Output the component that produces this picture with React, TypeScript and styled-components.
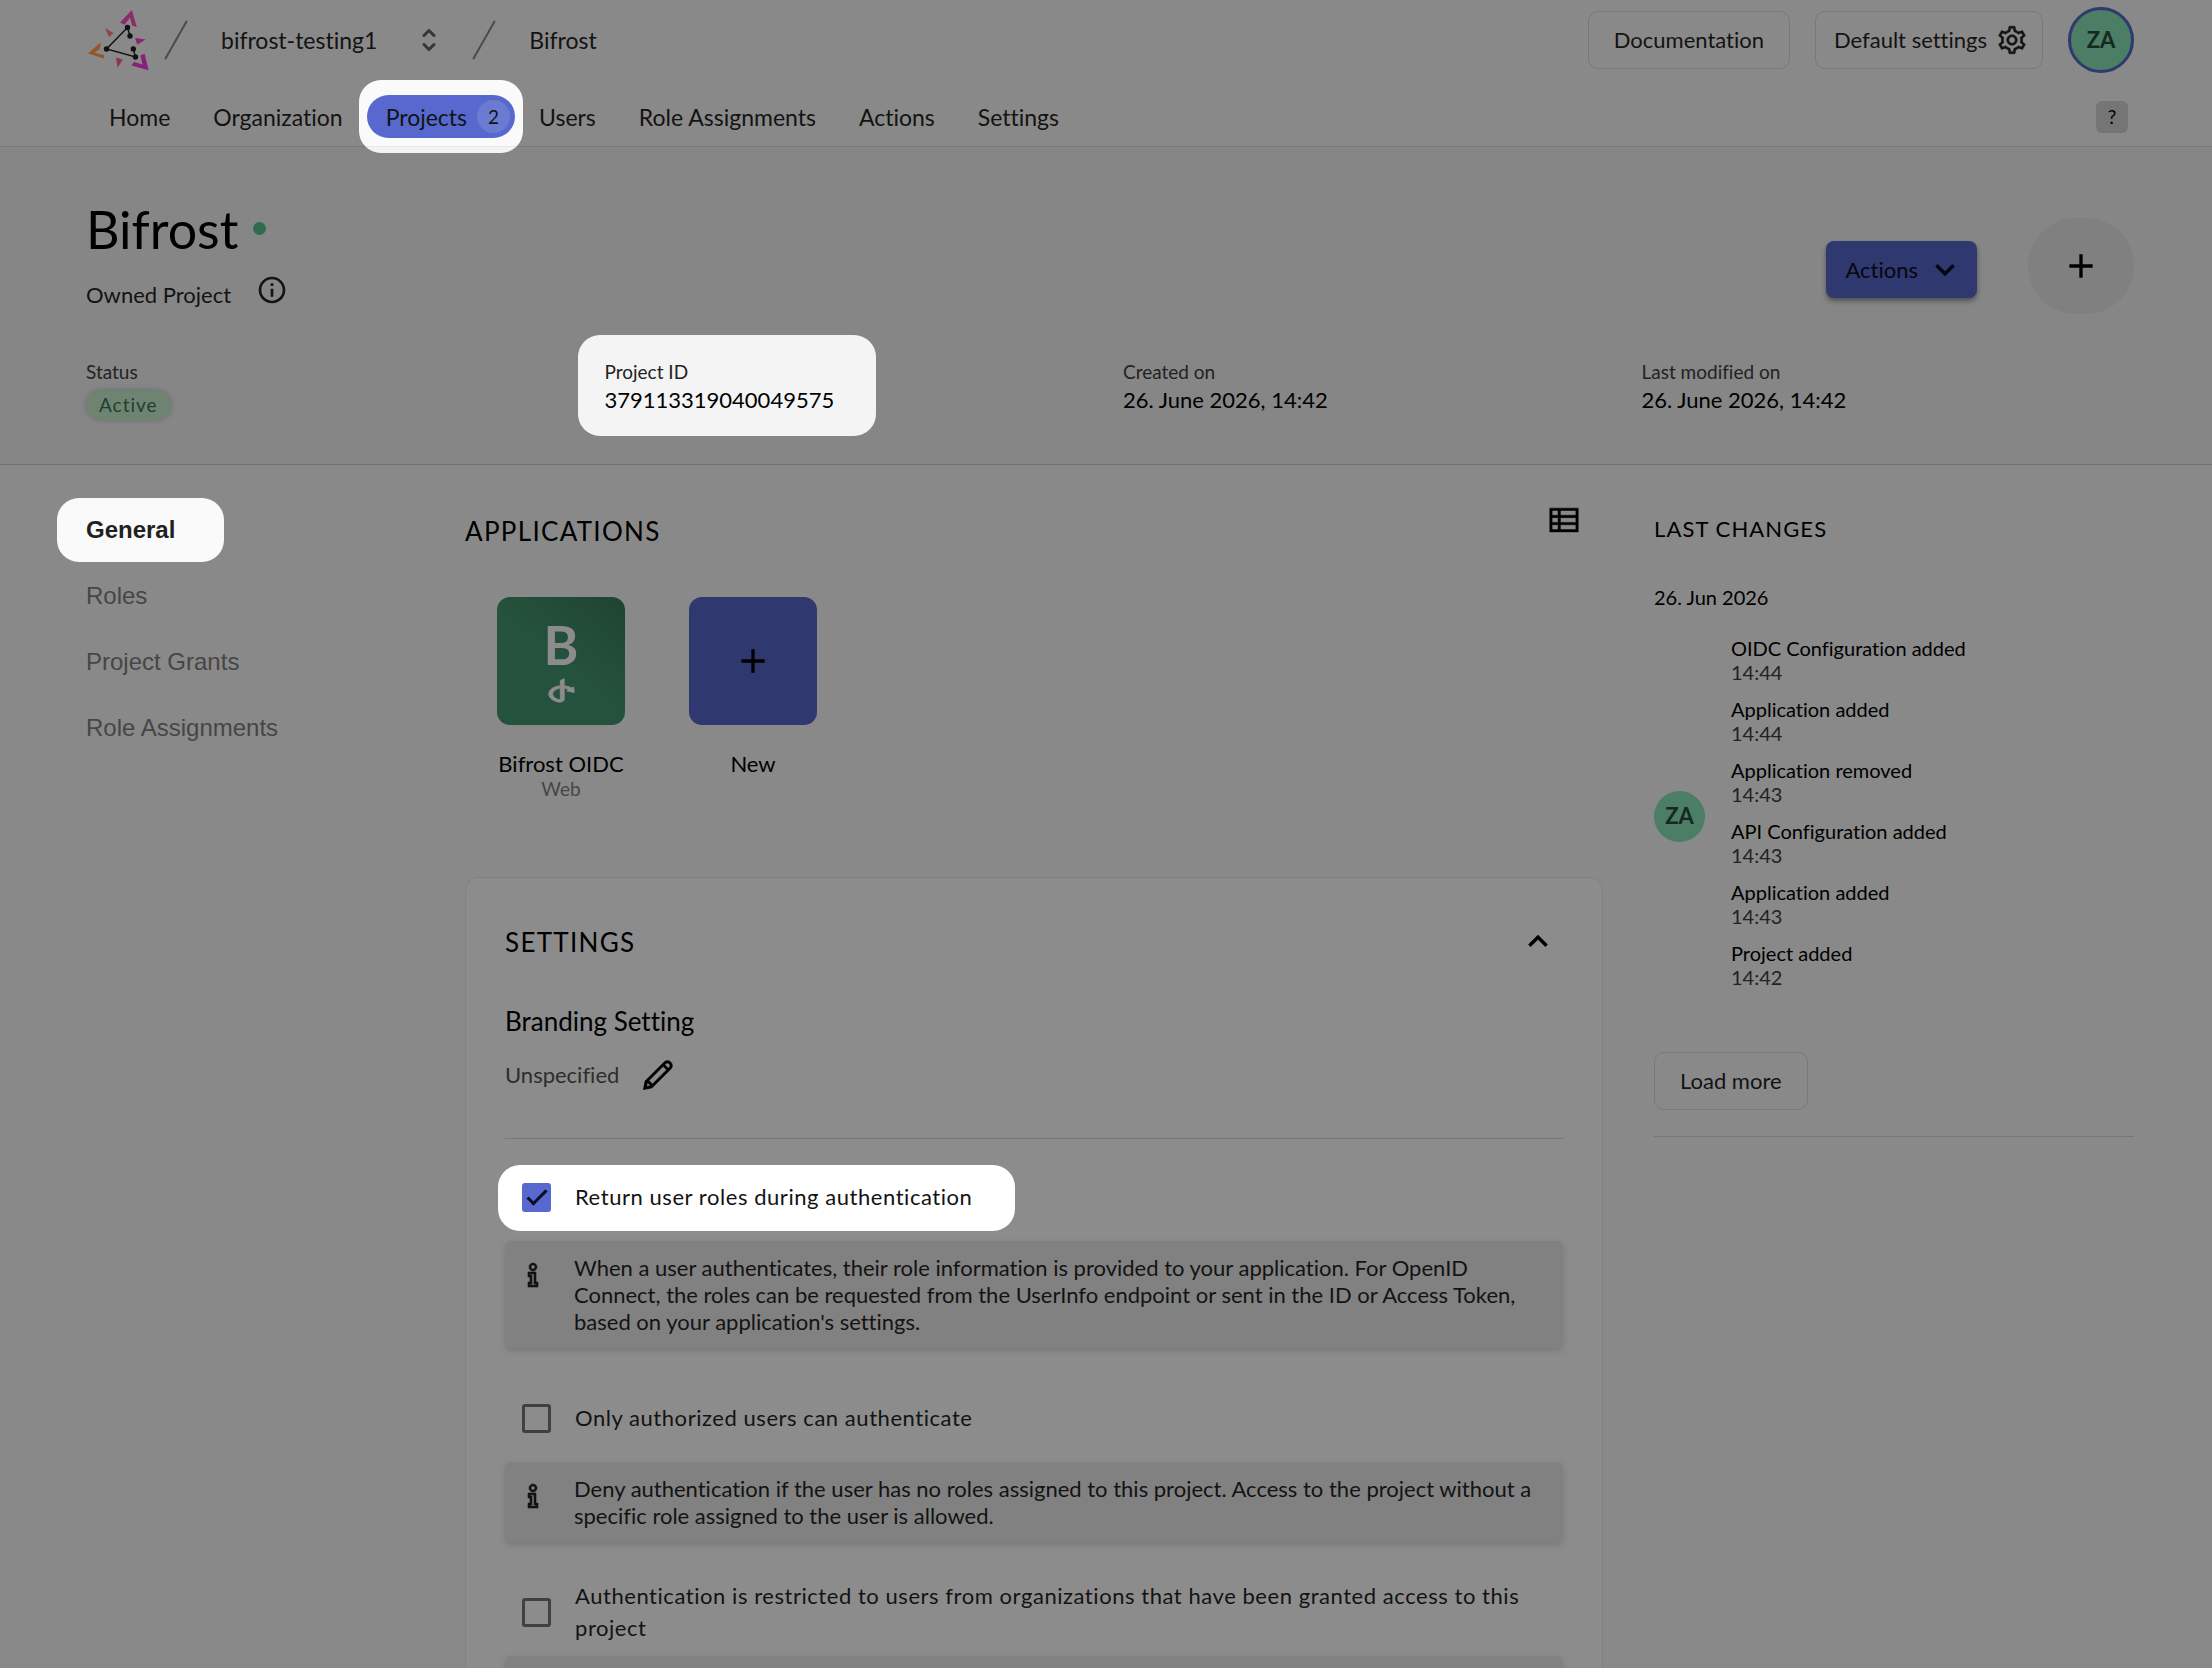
import React from "react";
import styled, { createGlobalStyle, css } from "styled-components";
import { MdAdd, MdInfoOutline } from "react-icons/md";
import { LiaCogSolid, LiaInfoSolid, LiaPenSolid, LiaThListSolid } from "react-icons/lia";
import { FaOpenid } from "react-icons/fa";

const c = {
  page: "#898989",
  band: "#868686",
  card: "#8c8c8c",
  line: "#787878",
  black: "#000000",
  text: "#131313",
  soft: "#222222",
  muted: "#464646",
  blue: "#2f386f",
  brightBlue: "#5769cf",
  mint: "#4c7d65",
  mintText: "#14291f",
};

const GlobalStyle = createGlobalStyle`
  *, *::before, *::after { box-sizing: border-box; }
  body {
    margin: 0;
    background: ${c.page};
    color: ${c.text};
    font-family: Lato, "Noto Sans", sans-serif;
    font-size: 22px;
    line-height: 32px;
    font-variant-ligatures: none;
  }
  h1, h2, h3, p, dl, dd, ul { margin: 0; padding: 0; font-weight: 400; }
  ul { list-style: none; }
  a { color: inherit; text-decoration: none; }
  button { font: inherit; font-variant-ligatures: none; color: inherit; padding: 0; border: 0; background: none; }
`;

/* bright panel that lifts one item out of the dimmed page */
const spotlight = (inset: string, fill: string) => css`
  position: relative;
  z-index: 2;
  &::before {
    content: "";
    position: absolute;
    z-index: -1;
    inset: ${inset};
    border-radius: 22px;
    background: ${fill};
  }
`;

const Page = styled.div`
  height: 100vh;
  overflow: hidden;
`;

const Header = styled.header`
  position: relative;
  z-index: 1;
  border-bottom: 1px solid ${c.line};
  padding: 0 78px 0 86px;
`;

const TopRow = styled.div`
  display: flex;
  align-items: center;
  height: 80px;
  font-size: 23px;
`;

const LogoLink = styled.a`
  display: flex;
  padding-right: 14px;
`;

const Crumb = styled.a`
  padding: 0 33px;
`;

const OrgButton = styled.button`
  display: flex;
  align-items: center;
  gap: 45px;
  padding: 0 36px 0 33px;
`;

const TopActions = styled.div`
  display: flex;
  align-items: center;
  gap: 25px;
  margin-left: auto;
  font-size: 22px;
`;

const OutlineButton = styled.button<{ $tight?: boolean }>`
  display: inline-flex;
  align-items: center;
  gap: 8px;
  height: 58px;
  padding: ${(p) => (p.$tight ? "0 13px 0 18px" : "0 25px")};
  border: 1px solid ${c.line};
  border-radius: 10px;
`;

const Avatar = styled.span<{ $size: number; $ring?: boolean }>`
  display: inline-flex;
  flex: none;
  align-items: center;
  justify-content: center;
  width: ${(p) => p.$size}px;
  height: ${(p) => p.$size}px;
  border: ${(p) => (p.$ring ? `3px solid ${c.blue}` : "0")};
  border-radius: 50%;
  background: ${c.mint};
  color: ${c.mintText};
  font-size: 22px;
  font-weight: 700;
`;

const NavRow = styled.nav`
  display: flex;
  align-items: center;
  justify-content: space-between;
  padding: 15px 6px 8px 4px;
`;

const NavList = styled.ul`
  display: flex;
  gap: 5px;
  font-size: 23px;
`;

const NavLink = styled.a<{ $active?: boolean }>`
  display: flex;
  align-items: center;
  gap: 10px;
  height: 43px;
  padding: 0 19px;
  border-radius: 22px;
  ${(p) =>
    p.$active &&
    css`
      padding-right: 5px;
      ${spotlight("-15px -8px", "linear-gradient(#fafafa 66px, #e9e9e9 66px 67px, #f4f4f4 67px)")}
      &::after {
        content: "";
        position: absolute;
        z-index: -1;
        inset: 0;
        border-radius: inherit;
        background: ${c.brightBlue};
      }
    `}
`;

const Count = styled.span`
  display: inline-flex;
  align-items: center;
  justify-content: center;
  width: 33px;
  height: 33px;
  border-radius: 50%;
  background: #6c7bd2;
  font-size: 19px;
`;

const HelpButton = styled.button`
  width: 32px;
  height: 32px;
  border-radius: 6px;
  background: #757575;
  color: ${c.black};
  font-size: 19px;
`;

const ProjectBand = styled.section`
  padding: 52px 78px 44px 86px;
  border-bottom: 1px solid #727272;
  background: ${c.band};
`;

const BandTop = styled.div`
  display: flex;
  justify-content: space-between;
  align-items: flex-start;
`;

const Title = styled.h1`
  display: flex;
  gap: 15px;
  color: ${c.black};
  font-size: 52px;
  line-height: 60px;
`;

const StateDot = styled.span`
  width: 13px;
  height: 13px;
  margin-top: 23px;
  border-radius: 50%;
  background: #2f6b4c;
`;

const Ownership = styled.div`
  display: flex;
  align-items: flex-end;
  gap: 25px;
  height: 42px;
  margin-top: 10px;
`;

const IconButton = styled.button`
  display: inline-flex;
  align-items: center;
  justify-content: center;
  height: 100%;
`;

const BandActions = styled.div`
  display: flex;
  align-items: flex-end;
  gap: 51px;
  margin-top: 19px;
`;

const PrimaryButton = styled.button`
  display: flex;
  align-items: center;
  gap: 17px;
  height: 57px;
  margin-bottom: 16px;
  padding: 0 22px 0 19px;
  border-radius: 8px;
  background: ${c.blue};
  color: #05070f;
  box-shadow: 0 3px 5px rgba(0, 0, 0, 0.4);
`;

const RoundButton = styled.button`
  display: flex;
  align-items: center;
  justify-content: center;
  width: 106px;
  height: 96px;
  border-radius: 48px;
  background: #808080;
  color: ${c.black};
`;

const Facts = styled.dl`
  display: grid;
  grid-template-columns: repeat(4, 1fr);
  align-items: start;
  gap: 26px;
  margin-top: 46px;
`;

const Fact = styled.div<{ $lit?: boolean }>`
  width: fit-content;
  ${(p) => p.$lit && spotlight("-25px -42px -20px -27px", "#f4f4f4")}
  dt {
    color: ${c.soft};
    font-size: 19px;
    line-height: 24px;
  }
  dd {
    color: ${c.black};
  }
`;

const Badge = styled.span`
  display: block;
  margin-top: 6px;
  padding: 0 13px;
  border-radius: 15px;
  background: #6f8470;
  box-shadow: 0 0 5px rgba(90, 90, 90, 0.6);
  color: #1b4030;
  font-size: 19px;
  line-height: 30px;
  letter-spacing: 1px;
`;

const Body = styled.div`
  display: grid;
  grid-template-columns: 328px minmax(0, 1fr) 480px;
  gap: 51px;
  padding: 36px 78px 0 86px;
`;

const SideNav = styled.nav`
  display: flex;
  flex-direction: column;
  align-items: flex-start;
  gap: 16px;
  padding-top: 4px;
  font-family: "Liberation Sans", Arial, sans-serif;
  font-size: 24px;
  line-height: 50px;
`;

const SideLink = styled.a<{ $active?: boolean }>`
  color: ${c.muted};
  ${(p) =>
    p.$active &&
    css`
      color: #212121;
      font-weight: 700;
      ${spotlight("-7px -49px -7px -29px", "#fafafa")}
    `}
`;

const SectionHead = styled.div`
  display: flex;
  justify-content: space-between;
  align-items: flex-end;
  color: ${c.black};
`;

const SectionTitle = styled.h2<{ $small?: boolean }>`
  color: ${c.black};
  font-size: ${(p) => (p.$small ? 22 : 26)}px;
  letter-spacing: 0.05em;
  text-transform: uppercase;
`;

const ViewToggle = styled.button`
  display: flex;
  align-self: flex-start;
  height: 46px;
  padding: 0 20px;
`;

const Apps = styled.ul`
  display: flex;
  gap: 64px;
  margin-top: 50px;
  padding-left: 32px;
`;

const AppLink = styled.a`
  display: flex;
  flex-direction: column;
  align-items: center;
  width: 128px;
  color: ${c.black};
  line-height: 26px;
  white-space: nowrap;
`;

const Tile = styled.span<{ $fresh?: boolean }>`
  display: flex;
  flex-direction: column;
  align-items: center;
  justify-content: center;
  gap: 5px;
  width: 128px;
  height: 128px;
  margin-bottom: 26px;
  border-radius: 13px;
  background: ${(p) => (p.$fresh ? c.blue : "linear-gradient(40deg, #25523c 50%, #1f4431)")};
  color: ${(p) => (p.$fresh ? c.black : c.card)};
  font-size: 53px;
  font-weight: 700;
  line-height: 53px;
`;

const AppKind = styled.span`
  color: ${c.muted};
  font-size: 19px;
  line-height: 24px;
`;

const Card = styled.section`
  margin-top: 76px;
  padding: 48px 39px;
  border: 1px solid #808080;
  border-radius: 13px;
  background: ${c.card};
`;

const CollapseButton = styled.button`
  display: flex;
  align-items: center;
  height: 32px;
  padding: 0 15px 2px;
`;

const SubTitle = styled.h3`
  margin-top: 47px;
  color: ${c.black};
  font-size: 26px;
`;

const Branding = styled.div`
  display: flex;
  align-items: center;
  gap: 20px;
  height: 32px;
  margin-top: 22px;
  color: #2d2d2d;
`;

const Rule = styled.hr`
  height: 1px;
  margin: 47px 0 26px;
  border: 0;
  background: ${c.line};
`;

const Option = styled.label<{ $lit?: boolean }>`
  display: flex;
  align-items: center;
  gap: 24px;
  width: fit-content;
  min-height: 64px;
  padding: 0 25px 0 17px;
  letter-spacing: 0.025em;
  ${(p) => p.$lit && spotlight("0 -18px -2px -7px", "#ffffff")}
`;

const Check = styled.input`
  flex: none;
  width: 29px;
  height: 29px;
  margin: 0;
  appearance: none;
  border: 3px solid #404040;
  border-radius: 3px;
  &:checked {
    border: 0;
    background: ${c.brightBlue};
  }
  &:checked::before {
    content: "";
    display: block;
    width: 20px;
    height: 10px;
    margin: 7px 0 0 5px;
    border: solid #0b0e20;
    border-width: 0 0 3px 3px;
    transform: rotate(-45deg);
  }
`;

const Note = styled.div`
  display: flex;
  gap: 25px;
  margin: 12px 0 38px;
  padding: 13px 20px 13px 12px;
  border-radius: 6px;
  background: #818181;
  box-shadow: 0 3px 6px rgba(90, 90, 90, 0.35);
  line-height: 27px;
  svg {
    flex: none;
    margin-top: 5px;
  }
`;

const Changes = styled.aside`
  padding-top: 12px;
`;

const ChangeDay = styled.h3`
  margin-top: 40px;
  color: ${c.black};
  font-size: 20px;
  line-height: 24px;
`;

const ChangeGroup = styled.div`
  display: flex;
  align-items: center;
  gap: 26px;
  margin-top: 27px;
  font-size: 20px;
  line-height: 24px;
`;

const ChangeList = styled.ul`
  display: grid;
  gap: 13px;
  padding-bottom: 7px;
`;

const ChangeItem = styled.li`
  color: ${c.black};
  time {
    display: block;
    color: ${c.soft};
  }
`;

const ChangeFoot = styled.div`
  margin-top: 56px;
  padding-bottom: 26px;
  border-bottom: 1px solid ${c.line};
`;

const Logo = () => (
  <svg width="64" height="64" viewBox="86 8 64 64" role="img" aria-label="Zitadel">
    <path d="M131.8 10 L120 22.6 L124.6 24.8 L130 17.6 L132.2 25.8 L136.8 27 Z" fill="#8c2a6b" />
    <path d="M148.6 70.2 L144.6 53.8 L140.4 55.6 L142.6 64.4 L134 62 L131.4 65.6 Z" fill="#86207a" />
    <path d="M88 53.4 L100.6 42.2 L100 48.4 L94.6 52.8 L104 55 L104.2 58.6 Z" fill="#955528" />
    <path d="M105 28 L113.6 33.2 L109 37 Z" fill="#94443f" />
    <path d="M135 38 L145.6 39.4 L137.4 44.6 Z" fill="#8b2277" />
    <path d="M116 57.4 L122.8 59.4 L117.6 67.8 Z" fill="#92354c" />
    <path d="M127.5 27.5 L106.5 49 L135.5 57 L133.3 49 M127.5 27.5 L130 36" fill="none" stroke="#111" strokeWidth="1.4" />
    <g fill="#111">
      <circle cx="127.5" cy="27.5" r="2.7" />
      <circle cx="130" cy="36" r="2.7" />
      <circle cx="133.3" cy="49" r="2.7" />
      <circle cx="135.5" cy="57" r="2.7" />
      <circle cx="106.5" cy="49" r="2.7" />
    </g>
  </svg>
);

const Slash = () => (
  <svg width="24" height="40" viewBox="0 0 24 40" aria-hidden="true">
    <path d="M1.5 38.5 L22.5 1.5" stroke="#4c4c4c" strokeWidth="2" strokeLinecap="round" />
  </svg>
);

const Sorter = () => (
  <svg width="14" height="24" viewBox="0 0 14 24" fill="none" stroke="#363636" strokeWidth="3" strokeLinecap="round" strokeLinejoin="round" aria-hidden="true">
    <path d="M2 7.5 L7 2.5 L12 7.5 M2 16.5 L7 21.5 L12 16.5" />
  </svg>
);

const Chevron = ({ up }: { up?: boolean }) => (
  <svg width="20" height="14" viewBox="0 0 20 14" fill="none" stroke="currentColor" strokeWidth="3.4" aria-hidden="true">
    <path d={up ? "M1.4 11.8 L10 3.2 L18.6 11.8" : "M1.4 2.2 L10 10.8 L18.6 2.2"} />
  </svg>
);

const navItems = ["Home", "Organization", "Projects", "Users", "Role Assignments", "Actions", "Settings"];
const sideItems = ["General", "Roles", "Project Grants", "Role Assignments"];
const changes = [
  ["OIDC Configuration added", "14:44"],
  ["Application added", "14:44"],
  ["Application removed", "14:43"],
  ["API Configuration added", "14:43"],
  ["Application added", "14:43"],
  ["Project added", "14:42"],
];
const options = [
  {
    label: "Return user roles during authentication",
    on: true,
    note: "When a user authenticates, their role information is provided to your application. For OpenID Connect, the roles can be requested from the UserInfo endpoint or sent in the ID or Access Token, based on your application's settings.",
  },
  {
    label: "Only authorized users can authenticate",
    on: false,
    note: "Deny authentication if the user has no roles assigned to this project. Access to the project without a specific role assigned to the user is allowed.",
  },
  {
    label: "Authentication is restricted to users from organizations that have been granted access to this project",
    on: false,
    note: "",
  },
];

export default function App() {
  return (
    <Page>
      <GlobalStyle />
      <Header>
        <TopRow>
          <LogoLink href="#home">
            <Logo />
          </LogoLink>
          <Slash />
          <OrgButton>
            bifrost-testing1
            <Sorter />
          </OrgButton>
          <Slash />
          <Crumb href="#project">Bifrost</Crumb>
          <TopActions>
            <OutlineButton>Documentation</OutlineButton>
            <OutlineButton $tight>
              Default settings
              <LiaCogSolid size={34} strokeWidth={0.5} />
            </OutlineButton>
            <Avatar $size={66} $ring>ZA</Avatar>
          </TopActions>
        </TopRow>
        <NavRow>
          <NavList>
            {navItems.map((item) => (
              <li key={item}>
                <NavLink href={`#${item}`} $active={item === "Projects"}>
                  {item}
                  {item === "Projects" && <Count>2</Count>}
                </NavLink>
              </li>
            ))}
          </NavList>
          <HelpButton>?</HelpButton>
        </NavRow>
      </Header>

      <ProjectBand>
        <BandTop>
          <div>
            <Title>
              Bifrost
              <StateDot />
            </Title>
            <Ownership>
              Owned Project
              <IconButton aria-label="About this project">
                <MdInfoOutline size={32} />
              </IconButton>
            </Ownership>
          </div>
          <BandActions>
            <PrimaryButton>
              Actions
              <Chevron />
            </PrimaryButton>
            <RoundButton aria-label="Add">
              <MdAdd size={40} />
            </RoundButton>
          </BandActions>
        </BandTop>
        <Facts>
          <Fact>
            <dt>Status</dt>
            <dd><Badge>Active</Badge></dd>
          </Fact>
          <Fact $lit>
            <dt>Project ID</dt>
            <dd>379113319040049575</dd>
          </Fact>
          <Fact>
            <dt>Created on</dt>
            <dd>26. June 2026, 14:42</dd>
          </Fact>
          <Fact>
            <dt>Last modified on</dt>
            <dd>26. June 2026, 14:42</dd>
          </Fact>
        </Facts>
      </ProjectBand>

      <Body>
        <SideNav>
          {sideItems.map((item) => (
            <SideLink key={item} href={`#${item}`} $active={item === "General"}>
              {item}
            </SideLink>
          ))}
        </SideNav>

        <main>
          <SectionHead>
            <SectionTitle>Applications</SectionTitle>
            <ViewToggle aria-label="List view">
              <LiaThListSolid size={38} strokeWidth={0.4} />
            </ViewToggle>
          </SectionHead>
          <Apps>
            <li>
              <AppLink href="#oidc">
                <Tile>
                  B
                  <FaOpenid size={29} strokeWidth={16} />
                </Tile>
                Bifrost OIDC
                <AppKind>Web</AppKind>
              </AppLink>
            </li>
            <li>
              <AppLink href="#new">
                <Tile $fresh>
                  <MdAdd size={40} />
                </Tile>
                New
              </AppLink>
            </li>
          </Apps>

          <Card>
            <SectionHead>
              <SectionTitle>Settings</SectionTitle>
              <CollapseButton aria-label="Collapse settings">
                <Chevron up />
              </CollapseButton>
            </SectionHead>
            <SubTitle>Branding Setting</SubTitle>
            <Branding>
              Unspecified
              <IconButton aria-label="Edit branding">
                <LiaPenSolid size={38} color="#000" strokeWidth={0.6} />
              </IconButton>
            </Branding>
            <Rule />
            {options.map((option) => (
              <React.Fragment key={option.label}>
                <Option $lit={option.on}>
                  <Check type="checkbox" defaultChecked={option.on} />
                  {option.label}
                </Option>
                <Note>
                  <LiaInfoSolid size={32} strokeWidth={0.6} />
                  <p>{option.note}</p>
                </Note>
              </React.Fragment>
            ))}
          </Card>
        </main>

        <Changes>
          <SectionTitle $small>Last changes</SectionTitle>
          <ChangeDay>26. Jun 2026</ChangeDay>
          <ChangeGroup>
            <Avatar $size={51}>ZA</Avatar>
            <ChangeList>
              {changes.map(([what, when], i) => (
                <ChangeItem key={i}>
                  {what}
                  <time>{when}</time>
                </ChangeItem>
              ))}
            </ChangeList>
          </ChangeGroup>
          <ChangeFoot>
            <OutlineButton>Load more</OutlineButton>
          </ChangeFoot>
        </Changes>
      </Body>
    </Page>
  );
}
